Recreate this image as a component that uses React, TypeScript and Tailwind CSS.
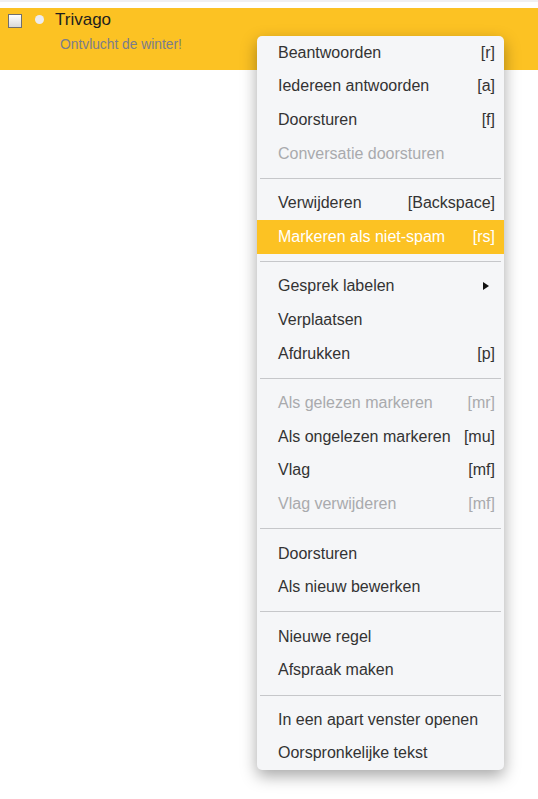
import React from "react";

type Item = {
  label: string;
  shortcut?: string;
  disabled?: boolean;
  active?: boolean;
  submenu?: boolean;
};

const groups: Item[][] = [
  [
    { label: "Beantwoorden", shortcut: "[r]" },
    { label: "Iedereen antwoorden", shortcut: "[a]" },
    { label: "Doorsturen", shortcut: "[f]" },
    { label: "Conversatie doorsturen", disabled: true },
  ],
  [
    { label: "Verwijderen", shortcut: "[Backspace]" },
    { label: "Markeren als niet-spam", shortcut: "[rs]", active: true },
  ],
  [
    { label: "Gesprek labelen", submenu: true },
    { label: "Verplaatsen" },
    { label: "Afdrukken", shortcut: "[p]" },
  ],
  [
    { label: "Als gelezen markeren", shortcut: "[mr]", disabled: true },
    { label: "Als ongelezen markeren", shortcut: "[mu]" },
    { label: "Vlag", shortcut: "[mf]" },
    { label: "Vlag verwijderen", shortcut: "[mf]", disabled: true },
  ],
  [{ label: "Doorsturen" }, { label: "Als nieuw bewerken" }],
  [{ label: "Nieuwe regel" }, { label: "Afspraak maken" }],
  [{ label: "In een apart venster openen" }, { label: "Oorspronkelijke tekst" }],
];

function MenuRow({ item }: { item: Item }) {
  const color = item.active
    ? "bg-[#fcc223] text-white"
    : item.disabled
      ? "text-[#a9aaad]"
      : "text-[#333333]";
  return (
    <div className={`flex h-[33.6px] items-center justify-between pl-[21px] pr-[9px] ${color}`}>
      <span>{item.label}</span>
      {item.shortcut && <span className="ml-3">{item.shortcut}</span>}
      {item.submenu && (
        <svg width="6" height="8" viewBox="0 0 6 8" className="mr-[6px]">
          <path d="M0 0 L6 4 L0 8 Z" fill="#111" />
        </svg>
      )}
    </div>
  );
}

export default function App() {
  return (
    <div className="relative h-[799px] w-[538px] overflow-hidden bg-white font-['Liberation_Sans',Arial,sans-serif]">
      <div className="h-[8px] border-t-2 border-[#f0f0f2]" />

      {/* Selected message row */}
      <div className="flex h-[62px] bg-[#fcc223] pl-[8px]">
        <div className="mt-[6px] h-[14px] w-[14px] border border-[#6f6f6f] bg-gradient-to-b from-white to-[#d9d9d9]" />
        <div className="ml-[13px] mt-[7px] h-[9px] w-[9px] rounded-full bg-[#ececf0]" />
        <div className="ml-[11px]">
          <div className="text-[17px] leading-[24px] text-[#1e1e1e]">Trivago</div>
          <div className="ml-[5px] mt-[5px] text-[13.8px] leading-[16px] text-[#7b7d8c]">
            Ontvlucht de winter!
          </div>
        </div>
      </div>

      {/* Context menu */}
      <div className="absolute left-[257px] top-[36px] w-[247px] rounded-[5px] bg-[#f5f6f8] text-[16px] shadow-[0_6px_16px_rgba(0,0,0,0.35)]">
        {groups.map((group, gi) => (
          <div key={gi}>
            {gi > 0 && <div className="mx-[3px] my-[7.5px] h-px bg-[#c6c7ca]" />}
            {group.map((item, ii) => (
              <MenuRow key={ii} item={item} />
            ))}
          </div>
        ))}
      </div>
    </div>
  );
}
